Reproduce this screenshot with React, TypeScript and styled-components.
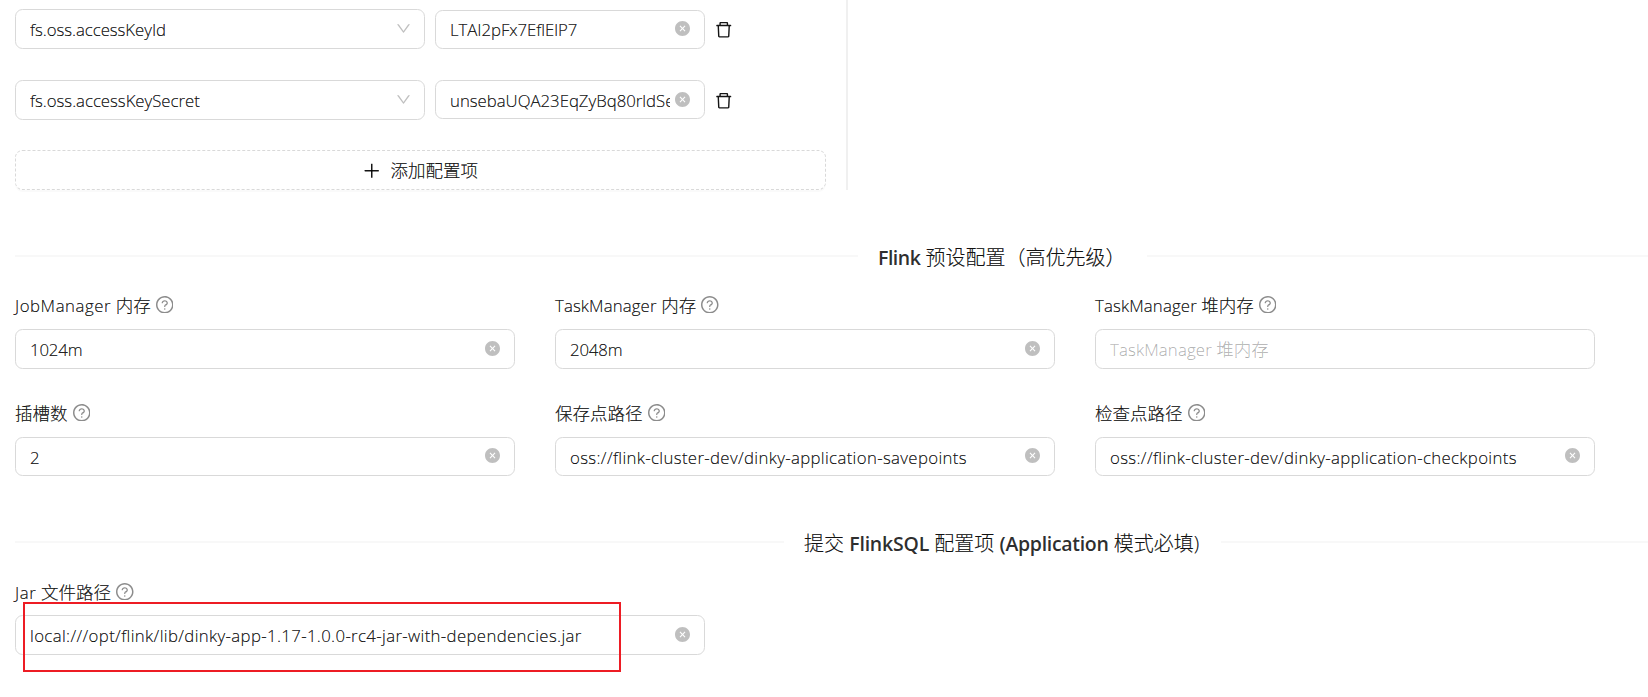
import React from "react";
import styled, { createGlobalStyle } from "styled-components";
import {
  AiFillCloseCircle,
  AiOutlineDelete,
  AiOutlineDown,
  AiOutlinePlus,
  AiOutlineQuestionCircle,
} from "react-icons/ai";

const GlobalStyle = createGlobalStyle`
  *, *::before, *::after { box-sizing: border-box; }
  body {
    margin: 0;
    background: #fff;
    color: rgba(0, 0, 0, 0.92);
    font-family: "Open Sans", "Noto Sans CJK SC", sans-serif;
    font-size: 17.5px;
    font-weight: 300;
    -webkit-text-stroke: 0.2px currentColor;
    overflow: hidden;
  }
`;

const ICON_BOX = "64 64 896 896";

const Page = styled.main`
  height: 697px;
  padding-left: 15px;
  overflow: hidden;
`;

const ConfigPanel = styled.section`
  width: 833px;
  height: 190px;
  padding-top: 9px;
  border-right: 2px solid #f0f0f0;
`;

const ConfigRow = styled.div<{ $gap: number }>`
  display: flex;
  align-items: center;
  height: 40px;
  margin-bottom: ${(p) => p.$gap}px;
`;

const Field = styled.div<{ $width: number; $height?: number }>`
  display: flex;
  align-items: center;
  width: ${(p) => p.$width}px;
  height: ${(p) => p.$height ?? 40}px;
  padding: 0 14px;
  border: 1px solid #d9d9d9;
  border-radius: 7.5px;
  background: #fff;
`;

const ValueField = styled(Field)<{ $down?: boolean }>`
  margin: ${(p) => (p.$down ? "1px 10px 0 10px" : "-1px 10px 0 10px")};
`;

const Value = styled.span<{ $spacing?: number; $muted?: boolean; $low?: boolean }>`
  flex: 1;
  min-width: 0;
  overflow: hidden;
  white-space: nowrap;
  line-height: 28px;
  padding-top: ${(p) => (p.$low ? 3 : 1)}px;
  font-size: ${(p) => (p.$muted ? 17.5 : 16.8)}px;
  letter-spacing: ${(p) => p.$spacing ?? 0}px;
  color: ${(p) => (p.$muted ? "rgba(0, 0, 0, 0.28)" : "inherit")};
`;

const Latin = styled.span<{ $spacing: number }>`
  font-size: 16.8px;
  letter-spacing: ${(p) => p.$spacing}px;
`;

const Strong = styled.strong<{ $spacing: number }>`
  font-size: 19.5px;
  font-weight: 600;
  letter-spacing: ${(p) => p.$spacing}px;
  color: rgba(0, 0, 0, 0.84);
  -webkit-text-stroke: 0;
`;

const ClearIcon = styled(AiFillCloseCircle).attrs({ viewBox: ICON_BOX })<{ $top?: number }>`
  flex: none;
  width: 15px;
  height: 15px;
  margin: ${(p) => p.$top ?? -2}px 0 0 5px;
  color: rgba(0, 0, 0, 0.25);
`;

const ArrowIcon = styled(AiOutlineDown).attrs({ viewBox: ICON_BOX })`
  flex: none;
  width: 15px;
  height: 15px;
  margin-top: -1px;
  margin-right: -1px;
  color: rgba(0, 0, 0, 0.25);
`;

const TrashIcon = styled(AiOutlineDelete).attrs({ viewBox: ICON_BOX })`
  width: 17.5px;
  height: 17.5px;
  margin-top: 2px;
`;

const AddButton = styled.button`
  display: flex;
  align-items: center;
  justify-content: center;
  gap: 10px;
  width: 811px;
  height: 40px;
  padding: 0;
  border: 1px dashed #d9d9d9;
  border-radius: 7.5px;
  background: #fff;
  box-shadow: 0 2px 0 rgba(0, 0, 0, 0.02);
  color: inherit;
  font: inherit;
`;

const AddText = styled.span`
  padding-bottom: 2px;
`;

const PlusIcon = styled(AiOutlinePlus).attrs({ viewBox: ICON_BOX })`
  width: 17.5px;
  height: 17.5px;
  margin-top: 1px;
`;

const Divider = styled.div<{ $lead: number; $title: number; $top: number }>`
  display: grid;
  grid-template-columns: ${(p) => p.$lead}px ${(p) => p.$title}px 1fr;
  align-items: center;
  height: 32px;
  margin-top: ${(p) => p.$top}px;
`;

const Rule = styled.span`
  height: 2px;
  background: #f8f8f8;
`;

const Title = styled.h2`
  margin: 0;
  padding: 4px 0 0 20px;
  font-size: 20px;
  font-weight: 300;
  line-height: 28px;
  height: 32px;
  white-space: nowrap;
`;

const FormGrid = styled.div<{ $top: number }>`
  display: grid;
  grid-template-columns: repeat(3, 500px);
  column-gap: 40px;
  margin-top: ${(p) => p.$top}px;
`;

const Item = styled.div`
  display: flex;
  flex-direction: column;
`;

const Label = styled.label<{ $gap?: number }>`
  display: flex;
  align-items: center;
  gap: 5px;
  height: 28px;
  margin-bottom: ${(p) => p.$gap ?? 10}px;
  line-height: 28px;
  white-space: pre;
`;

const HelpIcon = styled(AiOutlineQuestionCircle).attrs({ viewBox: ICON_BOX })`
  width: 17.5px;
  height: 17.5px;
  margin-top: -1px;
  color: rgba(0, 0, 0, 0.45);
`;

const JarItem = styled(Item)`
  position: relative;
  margin-top: 20px;
`;

const Highlight = styled.div`
  position: absolute;
  left: 8px;
  top: 24px;
  width: 598px;
  height: 70px;
  border: 2px solid #ed1c24;
`;

export default function App() {
  return (
    <>
      <GlobalStyle />
      <Page>
        <ConfigPanel>
          <ConfigRow $gap={31}>
            <Field $width={410}>
              <Value $spacing={-0.05}>fs.oss.accessKeyId</Value>
              <ArrowIcon />
            </Field>
            <ValueField $width={270} $height={39} $down>
              <Value $spacing={-0.06}>LTAI2pFx7EflElP7</Value>
              <ClearIcon />
            </ValueField>
            <TrashIcon />
          </ConfigRow>
          <ConfigRow $gap={30}>
            <Field $width={410}>
              <Value $spacing={-0.03}>fs.oss.accessKeySecret</Value>
              <ArrowIcon />
            </Field>
            <ValueField $width={270} $height={39}>
              <Value $low $spacing={-0.02}>unsebaUQA23EqZyBq80rldSe</Value>
              <ClearIcon $top={0} />
            </ValueField>
            <TrashIcon />
          </ConfigRow>
          <AddButton>
            <PlusIcon />
            <AddText>添加配置项</AddText>
          </AddButton>
        </ConfigPanel>

        <Divider $lead={843} $title={289} $top={50}>
          <Rule />
          <Title>
            <Strong $spacing={-0.5}>Flink</Strong> 预设配置（高优先级）
          </Title>
          <Rule />
        </Divider>

        <FormGrid $top={19}>
          <Item>
            <Label>
              <span><Latin $spacing={0.55}>JobManager</Latin> 内存</span>
              <HelpIcon />
            </Label>
            <Field $width={500}>
              <Value $spacing={-0.15}>1024m</Value>
              <ClearIcon />
            </Field>
          </Item>
          <Item>
            <Label>
              <span><Latin $spacing={0.12}>TaskManager</Latin> 内存</span>
              <HelpIcon />
            </Label>
            <Field $width={500}>
              <Value $spacing={-0.15}>2048m</Value>
              <ClearIcon />
            </Field>
          </Item>
          <Item>
            <Label>
              <span><Latin $spacing={0.14}>TaskManager</Latin> 堆内存</span>
              <HelpIcon />
            </Label>
            <Field $width={500}>
              <Value $muted><Latin $spacing={0.14}>TaskManager</Latin> 堆内存</Value>
            </Field>
          </Item>
        </FormGrid>

        <FormGrid $top={30}>
          <Item>
            <Label>插槽数<HelpIcon /></Label>
            <Field $width={500} $height={39}>
              <Value $low>2</Value>
              <ClearIcon />
            </Field>
          </Item>
          <Item>
            <Label>保存点路径<HelpIcon /></Label>
            <Field $width={500} $height={39}>
              <Value $low $spacing={0.34}>oss://flink-cluster-dev/dinky-application-savepoints</Value>
              <ClearIcon />
            </Field>
          </Item>
          <Item>
            <Label>检查点路径<HelpIcon /></Label>
            <Field $width={500} $height={39}>
              <Value $low $spacing={0.34}>oss://flink-cluster-dev/dinky-application-checkpoints</Value>
              <ClearIcon />
            </Field>
          </Item>
        </FormGrid>

        <Divider $lead={769} $title={437} $top={50}>
          <Rule />
          <Title>
            提交 <Strong $spacing={-0.2}>FlinkSQL</Strong> 配置项{" "}
            <Strong $spacing={-0.3}>(Application</Strong> 模式必填)
          </Title>
          <Rule />
        </Divider>

        <JarItem>
          <Label $gap={9}>
            <span><Latin $spacing={0.65}>Jar</Latin> 文件路径</span>
            <HelpIcon />
          </Label>
          <Field $width={690}>
            <Value $spacing={0.35}>local:///opt/flink/lib/dinky-app-1.17-1.0.0-rc4-jar-with-dependencies.jar</Value>
            <ClearIcon />
          </Field>
          <Highlight />
        </JarItem>
      </Page>
    </>
  );
}
